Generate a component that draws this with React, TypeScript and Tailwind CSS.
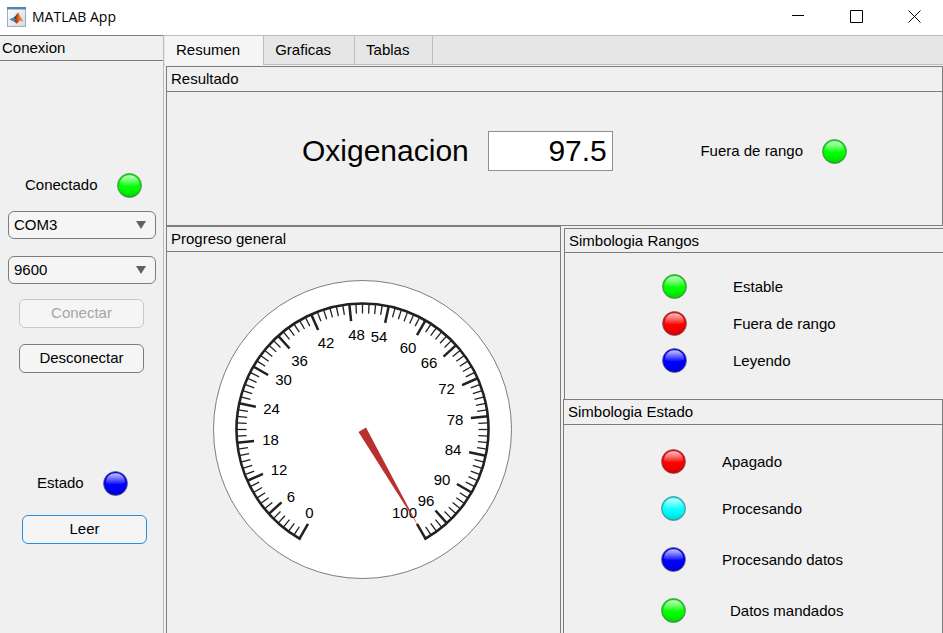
import { useId, useState, type ReactNode } from 'react';
import clsx from 'clsx';

type LedColor = 'green' | 'red' | 'blue' | 'cyan';

const LED_FILL: Record<LedColor, string> = {
  green: '#00ff00',
  red: '#ff0000',
  blue: '#0000ff',
  cyan: '#00ffff',
};

function Led({ color }: { color: LedColor }) {
  const id = useId();
  return (
    <svg className="shrink-0" width="25" height="25" viewBox="0 0 25 25" aria-hidden="true">
      <defs>
        <linearGradient id={`${id}-shine`} x1="0" y1="0" x2="0" y2="1">
          <stop offset="0" stopColor="#fff" stopOpacity="0.78" />
          <stop offset="0.5" stopColor="#fff" stopOpacity="0.42" />
          <stop offset="1" stopColor="#fff" stopOpacity="0.04" />
        </linearGradient>
        <linearGradient id={`${id}-shade`} x1="0" y1="0" x2="0" y2="1">
          <stop offset="0.6" stopColor="#000" stopOpacity="0" />
          <stop offset="1" stopColor="#000" stopOpacity="0.16" />
        </linearGradient>
      </defs>
      <circle cx="12.5" cy="12.5" r="12" fill={LED_FILL[color]} />
      <circle cx="12.5" cy="12.5" r="12" fill={`url(#${id}-shade)`} />
      <path
        d="M3 11.5 C3 5.6 7 2.2 12.5 2.2 C18 2.2 22 5.6 22 11.5 C19.5 14 5.500 14 3 11.5 Z"
        fill={`url(#${id}-shine)`}
      />
      <circle cx="12.5" cy="12.5" r="11.2" fill="none" stroke="#000" strokeOpacity="0.12" />
      <circle cx="12.5" cy="12.5" r="12" fill="none" stroke="#6e6e78" strokeOpacity="0.75" />
    </svg>
  );
}

function MatlabIcon() {
  return (
    <svg width="20" height="20" viewBox="0 0 20 20" aria-hidden="true">
      <defs>
        <linearGradient id="frame" x1="0" y1="0" x2="1" y2="1">
          <stop offset="0" stopColor="#ffffff" />
          <stop offset="1" stopColor="#d3dae2" />
        </linearGradient>
        <linearGradient id="peak" x1="0" y1="0" x2="1" y2="0">
          <stop offset="0" stopColor="#7d2418" />
          <stop offset="0.4" stopColor="#d9481c" />
          <stop offset="0.65" stopColor="#f0932b" />
          <stop offset="1" stopColor="#b8341a" />
        </linearGradient>
      </defs>
      <rect x="0.5" y="0.5" width="18" height="19" fill="url(#frame)" stroke="#9fadbb" />
      <rect x="0" y="0" width="19" height="2.4" fill="#4b86b4" />
      <path d="M2.4 12.2 L6.6 10.4 L8.6 11.6 L6.2 14.6 Z" fill="#3c86c6" />
      <path d="M6.6 10.4 C8.4 9.9 9.3 7.6 10.8 5.6 L9.6 11.4 L7.6 13.2 L6.2 14.6 L8 11.8 Z" fill="#2c4f7c" />
      <path
        d="M10.8 5.4 C12 5.6 13.2 9.6 16.4 14.6 C14.6 13.2 13.4 13.2 12.2 14.4 C11.2 15.4 10.2 16.6 9.2 16.6 C8.8 15.4 8 14.6 6.6 14.4 C9.2 12.6 9.4 8.6 10.8 5.4 Z"
        fill="url(#peak)"
      />
    </svg>
  );
}

function TitleBar() {
  return (
    <header className="flex h-[35px] items-center bg-white pb-0.5 pl-[7px]">
      <MatlabIcon />
      <h1 className="ml-[5px] font-['Open_Sans',sans-serif] text-[14px] leading-5">MATLAB App</h1>
      <div className="ml-auto flex self-stretch">
        <WindowButton label="Minimizar">
          <path d="M0 5.5H12" />
        </WindowButton>
        <WindowButton label="Maximizar">
          <path d="M0.5 0.5H12.5V12.5H0.5Z" />
        </WindowButton>
        <WindowButton label="Cerrar">
          <path d="M0.5 0.5L12.5 12.5M12.5 0.5L0.5 12.5" />
        </WindowButton>
      </div>
    </header>
  );
}

function WindowButton({ label, children }: { label: string; children: ReactNode }) {
  return (
    <button type="button" aria-label={label} className="flex w-[58px] items-center justify-center">
      <svg width="13" height="13" viewBox="0 0 13 13" fill="none" stroke="#000">
        {children}
      </svg>
    </button>
  );
}

const PUSH_BUTTON = 'h-[29px] w-[125px] rounded-md border bg-[#f5f5f5] pb-0.5 text-center leading-5';

function DropDown({ label, options }: { label: string; options: string[] }) {
  return (
    <div className="relative">
      <select
        aria-label={label}
        className="h-7 w-full appearance-none rounded-md border border-[#7d7d7d] bg-[#f5f5f5] pl-[5px] leading-5"
      >
        {options.map((option) => (
          <option key={option}>{option}</option>
        ))}
      </select>
      <svg className="pointer-events-none absolute top-2.5 right-2.5" width="10" height="8" viewBox="0 0 10 8" aria-hidden="true">
        <path d="M0 0H10L5 8Z" fill="#616161" />
      </svg>
    </div>
  );
}

function Sidebar() {
  return (
    <aside className="flex w-[164px] shrink-0 flex-col border-r border-[#bdbdbd]">
      <h2 className="h-[26px] border-y border-[#7d7d7d] pl-0.5 leading-6">Conexion</h2>
      <div className="flex flex-col pt-28 pr-[7px] pl-2">
        <div className="flex items-center gap-[19px] pl-[17px]">
          <span className="pb-0.5 leading-5">Conectado</span>
          <Led color="green" />
        </div>
        <div className="mt-[13px] flex flex-col gap-[17px]">
          <DropDown label="Puerto" options={['COM3', 'COM4']} />
          <DropDown label="Velocidad" options={['9600', '115200']} />
        </div>
        <div className="mt-[15px] flex flex-col gap-4 pl-[11px]">
          <button type="button" disabled className={clsx(PUSH_BUTTON, 'border-[#c8c8c8] text-[#a6a6a6]')}>
            Conectar
          </button>
          <button type="button" className={clsx(PUSH_BUTTON, 'border-[#7d7d7d]')}>
            Desconectar
          </button>
        </div>
        <div className="mt-[98px] flex items-center gap-[19px] pl-[29px]">
          <span className="pb-0.5 leading-5">Estado</span>
          <Led color="blue" />
        </div>
        <div className="mt-[19px] pl-3.5">
          <button type="button" className={clsx(PUSH_BUTTON, 'block border-[#268cdd]')}>
            Leer
          </button>
        </div>
      </div>
    </aside>
  );
}

const TABS = ['Resumen', 'Graficas', 'Tablas'];

function TabBar() {
  const [active, setActive] = useState('Resumen');
  return (
    <div role="tablist" className="flex h-[30px] border-y border-[#bdbdbd] bg-[#e6e6e6] pl-px">
      {TABS.map((tab) => (
        <button
          key={tab}
          type="button"
          role="tab"
          aria-selected={tab === active}
          onClick={() => setActive(tab)}
          className={clsx(
            'border-r border-[#bdbdbd] pr-[23px] pl-[11px] leading-7',
            tab === active && '-mb-px bg-[#f5f5f5] pb-px',
          )}
        >
          {tab}
        </button>
      ))}
    </div>
  );
}

function Panel({
  title,
  className,
  titleClassName = 'h-[25px]',
  children,
}: {
  title: string;
  className?: string;
  titleClassName?: string;
  children: ReactNode;
}) {
  return (
    <section className={clsx('border-t border-l border-[#7d7d7d] bg-[#f0f0f0]', className)}>
      <h2 className={clsx('border-b border-[#7d7d7d] pl-1 leading-6', titleClassName)}>{title}</h2>
      {children}
    </section>
  );
}

function ResultPanel() {
  return (
    <Panel title="Resultado" className="border-r border-b">
      <div className="flex items-center pt-[39px] pr-[95px] pb-[54px] pl-[135px]">
        <label htmlFor="oxigenacion" className="text-[30px] leading-10">
          Oxigenacion
        </label>
        <input
          id="oxigenacion"
          type="text"
          readOnly
          defaultValue="97.5"
          className="ml-[19px] h-10 w-[125px] border border-[#8f8f8f] bg-white pr-[5px] text-right text-[30px] leading-9"
        />
        <div className="ml-auto flex items-center gap-[19px]">
          <span className="leading-5">Fuera de rango</span>
          <Led color="green" />
        </div>
      </div>
    </Panel>
  );
}

const CENTER = 149.5;

/** Point on the dial: 0 starts at 210 degrees and the scale sweeps 300 degrees clockwise. */
function dialPoint(value: number, radius: number): [number, number] {
  const angle = ((210 + value * 3) * Math.PI) / 180;
  return [CENTER + radius * Math.sin(angle), CENTER - radius * Math.cos(angle)];
}

const DIAL_LABELS: [number, number, number][] = [
  [0, 96.5, 233],
  [6, 78, 217],
  [12, 66, 190],
  [18, 57.5, 160],
  [24, 58.5, 129],
  [30, 70.5, 100],
  [36, 86.5, 81],
  [42, 113, 63],
  [48, 143.5, 55],
  [54, 166, 57],
  [60, 195, 68],
  [66, 216, 83],
  [72, 233.5, 109],
  [78, 242, 140],
  [84, 240, 170],
  [90, 229, 200],
  [96, 213, 221],
  [100, 191.5, 233],
];

function Gauge() {
  const [startX, startY] = dialPoint(0, 126);
  const [endX, endY] = dialPoint(100, 126);
  const [tipX, tipY] = dialPoint(100, 112);
  return (
    <svg width="299" height="299" viewBox="0 0 299 299" role="img" aria-label="Progreso general">
      <circle cx={CENTER} cy={CENTER} r="149" fill="#fff" stroke="#7d7d7d" />
      {Array.from({ length: 101 }, (_, value) => {
        const major = value % 6 === 0 || value === 100;
        const [x1, y1] = dialPoint(value, 126);
        const [x2, y2] = dialPoint(value, major ? 109 : 116);
        return <line key={value} x1={x1} y1={y1} x2={x2} y2={y2} stroke="#212121" strokeWidth={major ? 2.5 : 1.3} />;
      })}
      <path
        d={`M${startX} ${startY}A126 126 0 1 1 ${endX} ${endY}`}
        fill="none"
        stroke="#212121"
        strokeWidth="2.6"
        strokeLinecap="square"
      />
      {DIAL_LABELS.map(([value, x, y]) => (
        <text key={value} x={x} y={y + 5} textAnchor="middle" fontSize="15" fill="#000">
          {value}
        </text>
      ))}
      <path d={`M145.500 152L153 147.500L${tipX} ${tipY}Z`} fill="#b8312f" />
    </svg>
  );
}

const RANGES: { color: LedColor; label: string }[] = [
  { color: 'green', label: 'Estable' },
  { color: 'red', label: 'Fuera de rango' },
  { color: 'blue', label: 'Leyendo' },
];

const STATES: { color: LedColor; label: string; rowClassName?: string; labelClassName?: string }[] = [
  { color: 'red', label: 'Apagado' },
  { color: 'cyan', label: 'Procesando', rowClassName: 'mt-[22px]' },
  { color: 'blue', label: 'Procesando datos', rowClassName: 'mt-[26px]' },
  { color: 'green', label: 'Datos mandados', rowClassName: 'mt-[26px]', labelClassName: 'pl-2' },
];

export default function App() {
  return (
    <div className="flex min-h-screen flex-col bg-[#f0f0f0] font-['Liberation_Sans',Arial,sans-serif] text-[15px] text-black">
      <TitleBar />
      <div className="flex flex-1">
        <Sidebar />
        <main className="flex min-w-0 flex-1 flex-col">
          <TabBar />
          <div className="flex flex-1 flex-col pt-px pl-0.5">
            <ResultPanel />
            <div className="grid flex-1 grid-cols-[395fr_380fr] gap-x-0.5">
              <Panel title="Progreso general" className="border-r">
                <div className="flex justify-center pt-7 pr-0.5">
                  <Gauge />
                </div>
              </Panel>
              <div className="flex flex-col pt-0.5">
                <Panel title="Simbologia Rangos" className="ml-px" titleClassName="h-6">
                  <ul className="flex flex-col gap-3 pt-[21px] pb-[26px] pl-[97px]">
                    {RANGES.map(({ color, label }) => (
                      <li key={label} className="flex items-center gap-[46px]">
                        <Led color={color} />
                        <span className="leading-5">{label}</span>
                      </li>
                    ))}
                  </ul>
                </Panel>
                <Panel title="Simbologia Estado" className="flex-1 border-r">
                  <ul className="flex flex-col pt-6 pl-[97px]">
                    {STATES.map(({ color, label, rowClassName, labelClassName }) => (
                      <li key={label} className={clsx('flex items-center gap-9', rowClassName)}>
                        <Led color={color} />
                        <span className={clsx('leading-5', labelClassName)}>{label}</span>
                      </li>
                    ))}
                  </ul>
                </Panel>
              </div>
            </div>
          </div>
        </main>
      </div>
    </div>
  );
}
